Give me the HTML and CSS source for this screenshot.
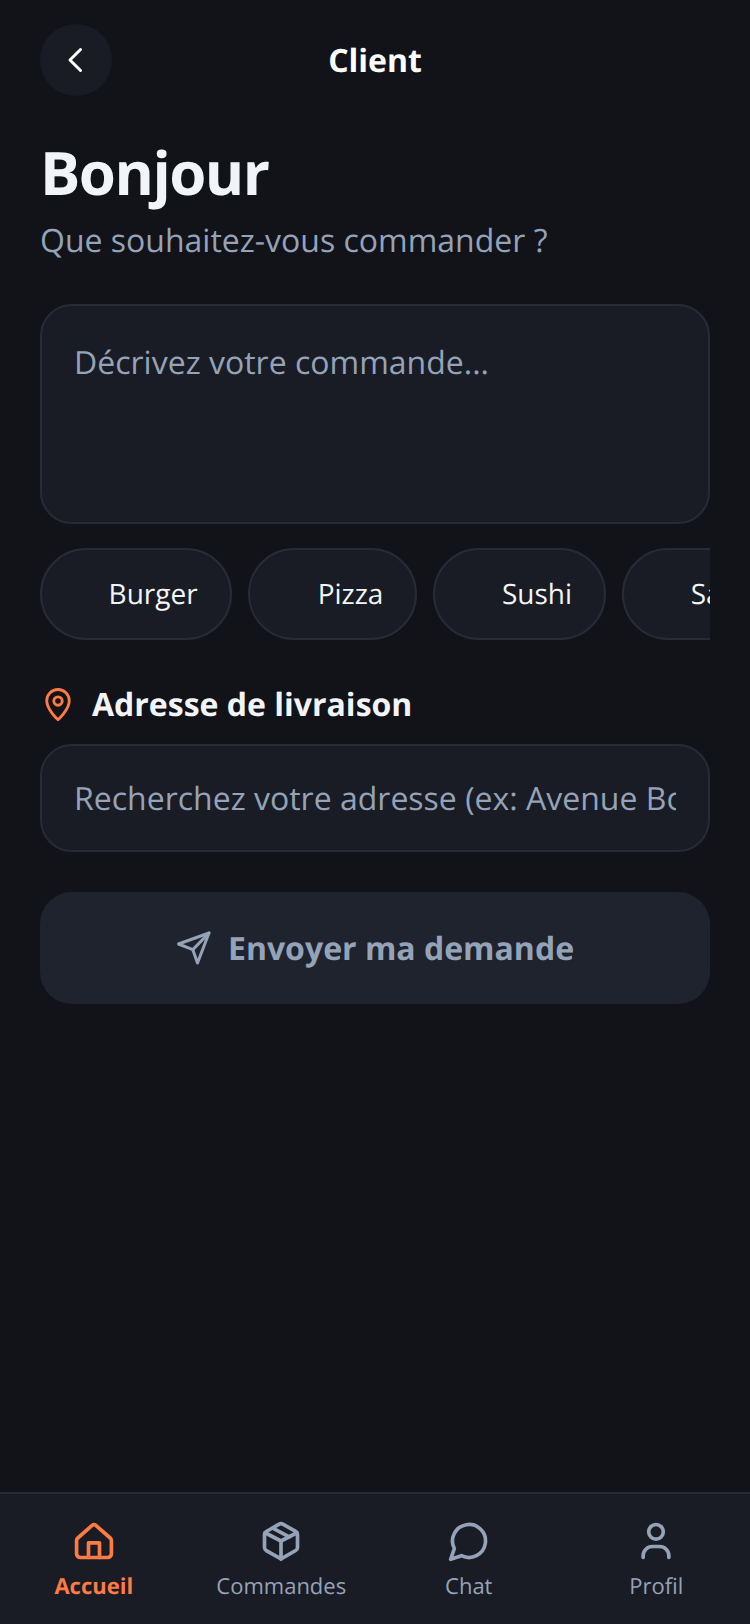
FILE: index.html
```html
<!DOCTYPE html>
<html lang="fr">
	<head>
		<meta charset="utf-8">
		<title>Client</title>
		<meta name="viewport" content="width=device-width, initial-scale=1">
		<link rel="stylesheet" href="styles.css">
	</head>
	<body>
		<div class="app">
			<header class="topbar">
				<button class="back" type="button" aria-label="Retour">
					<svg width="36" height="36" viewBox="0 0 24 24" fill="none" stroke="#ffffff" stroke-width="2" stroke-linecap="round" stroke-linejoin="round"><path d="M15 5l-7 7 7 7"/></svg>
				</button>
				<div class="topbar-title">Client</div>
			</header>

			<main class="content">
				<h1>Bonjour</h1>
				<p class="subtitle">Que souhaitez-vous commander ?</p>

				<textarea class="order" placeholder="Décrivez votre commande..."></textarea>

				<div class="chips">
					<div class="chip"><span class="chip-emoji"></span>Burger</div>
					<div class="chip chip-pizza"><span class="chip-emoji"></span>Pizza</div>
					<div class="chip"><span class="chip-emoji"></span>Sushi</div>
					<div class="chip"><span class="chip-emoji"></span>Salade</div>
				</div>

				<div class="address-label">
					<svg width="36" height="36" viewBox="0 0 24 24" fill="none" stroke="#ff7a45" stroke-width="1.9" stroke-linecap="round" stroke-linejoin="round"><path d="M12 22.500s-7.500-6.800-7.500-12.700a7.500 7.500 0 0 1 15 0C19.500 15.700 12 22.500 12 22.500z"/><circle cx="12" cy="10" r="2.800"/></svg>
					<span>Adresse de livraison</span>
				</div>
				<input class="address" type="text" placeholder="Recherchez votre adresse (ex: Avenue Bourguiba, Tunis)">

				<button class="send" type="button">
					<svg width="40" height="40" viewBox="0 0 24 24" fill="none" stroke="#94a3b8" stroke-width="1.800" stroke-linecap="round" stroke-linejoin="round"><path d="M19.800 3L1.500 9.600l8.600 3.400 2.800 8z"/><path d="M19.800 3L10.100 13"/></svg>
					<span>Envoyer ma demande</span>
				</button>
			</main>

			<nav class="tabs">
				<div class="tab active">
					<svg width="44" height="44" viewBox="0 0 24 24" fill="none" stroke="#ff7a45" stroke-width="2" stroke-linecap="round" stroke-linejoin="round"><path d="M3 10.500L11 3.500a1.500 1.500 0 0 1 2 0l8 7a2 2 0 0 1 .500 1.300V19a2 2 0 0 1-2 2H4.500a2 2 0 0 1-2-2v-7.200A2 2 0 0 1 3 10.500z"/><path d="M9 21v-8h6v8"/></svg>
					<span>Accueil</span>
				</div>
				<div class="tab">
					<svg width="44" height="44" viewBox="0 0 24 24" fill="none" stroke="#94a3b8" stroke-width="2" stroke-linecap="round" stroke-linejoin="round"><path d="M11 2.800a2 2 0 0 1 2 0l7 4A2 2 0 0 1 21 8.500v7a2 2 0 0 1-1 1.700l-7 4a2 2 0 0 1-2 0l-7-4a2 2 0 0 1-1-1.700v-7a2 2 0 0 1 1-1.700z"/><path d="M3.300 7.500L12 12l8.700-4.500"/><path d="M12 22V12"/><path d="M7.500 5l9 4.800"/></svg>
					<span>Commandes</span>
				</div>
				<div class="tab">
					<svg width="44" height="44" viewBox="0 0 24 24" fill="none" stroke="#94a3b8" stroke-width="2" stroke-linecap="round" stroke-linejoin="round"><path d="M7.900 20A9 9 0 1 0 4 16.100L2 22z"/></svg>
					<span>Chat</span>
				</div>
				<div class="tab">
					<svg width="44" height="44" viewBox="0 0 24 24" fill="none" stroke="#94a3b8" stroke-width="2" stroke-linecap="round" stroke-linejoin="round"><circle cx="12" cy="7" r="4"/><path d="M5 21v-1a5 5 0 0 1 5-5h4a5 5 0 0 1 5 5v1"/></svg>
					<span>Profil</span>
				</div>
			</nav>
		</div>
	</body>
</html>
```

FILE: styles.css
```css
* {
	box-sizing: border-box;
	text-rendering: geometricPrecision;
}
html, body {
	margin: 0;
	padding: 0;
}
body {
	background: #111318;
	color: #ffffff;
	font-family: "Open Sans", "Liberation Sans", sans-serif;
}
.app {
	height: 1624px;
	display: flex;
	flex-direction: column;
	overflow: hidden;
}

.topbar {
	display: flex;
	align-items: center;
	justify-content: center;
	position: relative;
	height: 72px;
	margin: 24px 40px 0;
}
.back {
	position: absolute;
	left: 0;
	top: 0;
	width: 72px;
	height: 72px;
	border: 0;
	border-radius: 50%;
	background: #191c24;
	display: flex;
	align-items: center;
	justify-content: center;
	padding: 0;
}
.topbar-title {
	padding-top: 2px;
	font-size: 32px;
	font-weight: 700;
	line-height: 44px;
}

.content {
	flex: 1;
	padding: 0 40px;
	display: flex;
	flex-direction: column;
}
h1 {
	margin: 36px 0 0;
	font-size: 60px;
	line-height: 80px;
	font-weight: 700;
	letter-spacing: -1.5px;
	color: #f1f5f9;
}
.subtitle {
	margin: 7px 0 0;
	font-size: 32px;
	line-height: 44px;
	color: #94a3b8;
}

.order {
	display: block;
	width: 100%;
	height: 220px;
	margin-top: 41px;
	padding: 35px 32px;
	background: #191c24;
	border: 2px solid #282b36;
	border-radius: 32px;
	color: #ffffff;
	font-family: inherit;
	font-size: 32px;
	line-height: 44px;
	resize: none;
	outline: none;
}
.order::placeholder,
.address::placeholder {
	color: #94a3b8;
	opacity: 1;
}

.chips {
	display: flex;
	gap: 16px;
	margin-top: 24px;
	overflow: hidden;
}
.chip {
	flex: none;
	display: flex;
	align-items: center;
	height: 92px;
	padding: 0 32px;
	background: #191c24;
	border: 2px solid #282b36;
	border-radius: 46px;
	font-size: 28px;
	color: #f1f5f9;
}
.chip-emoji {
	width: 34.600px;
}
.chip-pizza .chip-emoji {
	width: 36px;
}

.address-label {
	display: flex;
	align-items: center;
	gap: 16px;
	margin-top: 42px;
	height: 44px;
	font-size: 32px;
	font-weight: 700;
	color: #f1f5f9;
}

.address {
	display: block;
	width: 100%;
	height: 108px;
	margin-top: 18px;
	padding: 0 32px;
	background: #191c24;
	border: 2px solid #282b36;
	border-radius: 32px;
	font-family: inherit;
	font-size: 32px;
	color: #ffffff;
	outline: none;
}

.send {
	display: flex;
	align-items: center;
	justify-content: center;
	gap: 12px;
	width: 100%;
	height: 112px;
	margin-top: 40px;
	padding: 0;
	border: 0;
	border-radius: 32px;
	background: #1f232d;
	color: #94a3b8;
	font-family: inherit;
	font-size: 32px;
	font-weight: 700;
}

.tabs {
	display: flex;
	height: 132px;
	background: #191c24;
	border-top: 2px solid #282b36;
}
.tab {
	flex: 1;
	display: flex;
	flex-direction: column;
	align-items: center;
	padding-top: 25px;
	font-size: 22px;
	line-height: 30px;
	color: #94a3b8;
}
.tab span {
	margin-top: 8px;
}
.tab.active {
	color: #ff7a45;
	font-weight: 700;
}
```
